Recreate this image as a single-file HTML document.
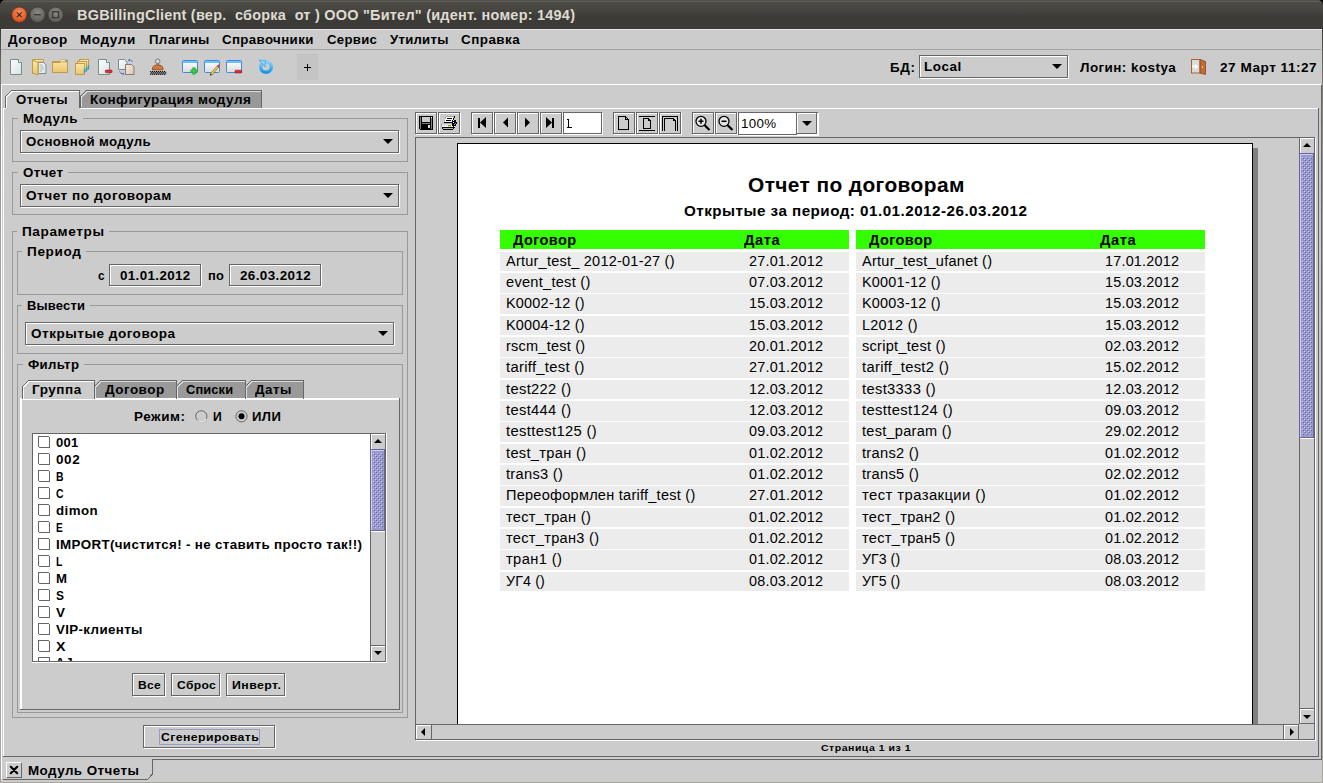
<!DOCTYPE html>
<html><head><meta charset="utf-8"><style>
html,body{margin:0;padding:0;}
body{width:1323px;height:783px;position:relative;overflow:hidden;background:#cccccc;font-family:"Liberation Sans",sans-serif;}
body div{position:absolute;box-sizing:border-box;}
</style></head><body>
<div style="left:0px;top:0px;width:1323px;height:29px;background:#000;"></div>
<div style="left:0px;top:0px;width:1323px;height:29px;background:linear-gradient(#55534e 0px,#4b4a45 3px,#45443f 12px,#3c3b37 16px,#3c3b37 29px);border-radius:5px 5px 0 0;"></div>
<div style="left:3px;top:1px;width:1317px;height:1px;background:#5e5c57;"></div>
<svg style="position:absolute;left:10px;top:5px" width="60" height="19" viewBox="0 0 60 19"><defs><radialGradient id="rc" cx="50%" cy="35%" r="60%"><stop offset="0" stop-color="#f98c5e"/><stop offset="1" stop-color="#d9521b"/></radialGradient><radialGradient id="rg" cx="50%" cy="35%" r="60%"><stop offset="0" stop-color="#8a8883"/><stop offset="1" stop-color="#5f5d58"/></radialGradient></defs><circle cx="9.3" cy="9.7" r="7.7" fill="url(#rc)" stroke="#3a2a20" stroke-width="0.6"/><path d="M6.9 7.3 L11.7 12.1 M11.7 7.3 L6.9 12.1" stroke="#3b2316" stroke-width="1.1"/><circle cx="27.5" cy="9.7" r="7.7" fill="url(#rg)" stroke="#33322e" stroke-width="0.6"/><path d="M24.1 9.7 H30.9" stroke="#3a3935" stroke-width="1.3"/><circle cx="45.6" cy="9.7" r="7.7" fill="url(#rg)" stroke="#33322e" stroke-width="0.6"/><rect x="42.6" y="6.7" width="6" height="6" fill="none" stroke="#3a3935" stroke-width="1.3"/></svg>
<div style="left:77.00px;transform:scaleX(1.0335);transform-origin:0 0;letter-spacing:0.226px;top:8.05px;font-size:14.00px;line-height:14.00px;font-weight:bold;color:#dfdbd2;white-space:pre;">BGBillingClient (вер.  сборка  от ) ООО &quot;Бител&quot; (идент. номер: 1494)</div>
<div style="left:0px;top:29px;width:1px;height:754px;background:linear-gradient(#3c3b37 0px,#6e6b66 40px,#8a8680 80px,#a09c96 200px,#a8a49e 400px);"></div>
<div style="left:1px;top:85px;width:1px;height:694px;background:#ffffff;"></div>
<div style="left:1322px;top:29px;width:1px;height:754px;background:linear-gradient(#3c3b37 0px,#6e6b66 40px,#8a8680 80px,#a09c96 200px,#a8a49e 400px);"></div>
<div style="left:1321px;top:85px;width:1px;height:675px;background:#666666;"></div>
<div style="left:1px;top:29px;width:1321px;height:1px;background:#e6e6e6;"></div>
<div style="left:1px;top:49px;width:1320px;height:1px;background:#a3a3a3;"></div>
<div style="left:8.00px;transform:scaleX(1.0581);transform-origin:0 0;letter-spacing:0.486px;top:33.83px;font-size:12.72px;line-height:12.72px;font-weight:bold;color:#000;white-space:pre;">Договор</div>
<div style="left:80.00px;transform:scaleX(1.0614);transform-origin:0 0;letter-spacing:0.570px;top:33.83px;font-size:12.72px;line-height:12.72px;font-weight:bold;color:#000;white-space:pre;">Модули</div>
<div style="left:148.80px;transform:scaleX(1.0393);transform-origin:0 0;letter-spacing:0.353px;top:33.83px;font-size:12.72px;line-height:12.72px;font-weight:bold;color:#000;white-space:pre;">Плагины</div>
<div style="left:222.20px;transform:scaleX(1.0443);transform-origin:0 0;letter-spacing:0.356px;top:33.83px;font-size:12.72px;line-height:12.72px;font-weight:bold;color:#000;white-space:pre;">Справочники</div>
<div style="left:327.40px;transform:scaleX(1.0337);transform-origin:0 0;letter-spacing:0.305px;top:33.83px;font-size:12.72px;line-height:12.72px;font-weight:bold;color:#000;white-space:pre;">Сервис</div>
<div style="left:390.00px;transform:scaleX(1.0309);transform-origin:0 0;letter-spacing:0.275px;top:33.83px;font-size:12.72px;line-height:12.72px;font-weight:bold;color:#000;white-space:pre;">Утилиты</div>
<div style="left:461.40px;transform:scaleX(1.0544);transform-origin:0 0;letter-spacing:0.456px;top:33.83px;font-size:12.72px;line-height:12.72px;font-weight:bold;color:#000;white-space:pre;">Справка</div>
<div style="left:1px;top:84px;width:1320px;height:1px;background:#ffffff;"></div>
<div style="left:890.30px;transform:scaleX(1.0563);transform-origin:0 0;letter-spacing:0.600px;top:62.23px;font-size:12.72px;line-height:12.72px;font-weight:bold;color:#000;white-space:pre;">БД:</div>
<div style="left:920px;top:56px;width:148px;height:22px;background:#cccccc;"></div>
<div style="left:920px;top:56px;width:149px;height:23px;border:1px solid #ffffff;"></div>
<div style="left:919px;top:55px;width:149px;height:23px;border:1px solid #666666;"></div>
<div style="left:924.10px;transform:scaleX(1.0591);transform-origin:0 0;letter-spacing:0.464px;top:61.23px;font-size:12.72px;line-height:12.72px;font-weight:bold;color:#000;white-space:pre;">Local</div>
<div style="left:1052.0px;top:64px;width:0;height:0;border-left:5.0px solid transparent;border-right:5.0px solid transparent;border-top:5px solid #000;"></div>
<div style="left:1080.00px;transform:scaleX(1.0598);transform-origin:0 0;letter-spacing:0.403px;top:62.23px;font-size:12.72px;line-height:12.72px;font-weight:bold;color:#000;white-space:pre;">Логин: kostya</div>
<div style="left:1220.00px;transform:scaleX(1.0705);transform-origin:0 0;letter-spacing:0.465px;top:62.23px;font-size:12.72px;line-height:12.72px;font-weight:bold;color:#000;white-space:pre;">27 Март 11:27</div>
<div style="left:297px;top:54px;width:21px;height:26px;background:#c4c4c4;"></div>
<svg style="position:absolute;left:304px;top:64px" width="8" height="8" viewBox="0 0 8 8" shape-rendering="crispEdges"><path d="M0 3.5 H7 M3.5 0 V7" stroke="#000" stroke-width="1"/></svg>
<svg style="position:absolute;left:8px;top:57px" width="18" height="19" viewBox="0 0 18 19"><defs><linearGradient id="pg" x1="0" y1="0" x2="1" y2="1"><stop offset="0" stop-color="#ffffff"/><stop offset="1" stop-color="#d6e2e2"/></linearGradient><linearGradient id="fd" x1="0" y1="0" x2="0" y2="1"><stop offset="0" stop-color="#fbe9a6"/><stop offset="1" stop-color="#e8c46e"/></linearGradient><linearGradient id="bg2" x1="0" y1="0" x2="1" y2="1"><stop offset="0" stop-color="#f2ebe0"/><stop offset="1" stop-color="#d9c8b0"/></linearGradient><linearGradient id="wn" x1="0" y1="0" x2="0" y2="1"><stop offset="0" stop-color="#ffffff"/><stop offset="1" stop-color="#dcdcdc"/></linearGradient><linearGradient id="rf" x1="0" y1="0" x2="0" y2="1"><stop offset="0" stop-color="#8fd0f8"/><stop offset="1" stop-color="#1898ec"/></linearGradient></defs><path d="M2.5 2.5 H10.5 L13.5 5.5 V17.5 H2.5 Z" fill="url(#pg)" stroke="#7c8b8b" stroke-width="1"/><path d="M10.5 2.5 V5.5 H13.5" fill="#fff" stroke="#7c8b8b" stroke-width="1"/></svg>
<svg style="position:absolute;left:30px;top:57px" width="18" height="19" viewBox="0 0 18 19"><path d="M8 5.5 H13.5 L16 8.0 V16.5 H8 Z" fill="url(#pg)" stroke="#7c8b8b" stroke-width="1"/><path d="M9.5 8 H13 M9.5 10 H14 M9.5 12 H14 M9.5 14 H12" stroke="#a8b4b4" stroke-width="1"/><path d="M2.5 2.5 H13.5 V5 H8 V16.5 H2.5 Z" fill="url(#fd)" stroke="#c49a4a" stroke-width="1"/><path d="M2.5 3 L8 5.5 V18 L2.5 16 Z" fill="url(#fd)" stroke="#c49a4a" stroke-width="1"/></svg>
<svg style="position:absolute;left:50px;top:57px" width="20" height="19" viewBox="0 0 20 19"><path d="M2.5 4.5 H10 L11 3 H17.5 V15.5 H2.5 Z" fill="url(#fd)" stroke="#c49a4a" stroke-width="1"/><path d="M11 4 H16.5" stroke="#fff" stroke-width="1.5"/><path d="M15 4 H17" stroke="#2aa0e8" stroke-width="1.5"/><path d="M2.5 5.5 H10.5 L11.5 4.8 H17.5" fill="none" stroke="#c49a4a" stroke-width="1"/></svg>
<svg style="position:absolute;left:73px;top:57px" width="19" height="20" viewBox="0 0 19 20"><rect x="6.5" y="2.5" width="9" height="10" fill="url(#fd)" stroke="#c49a4a"/><rect x="4.5" y="4.5" width="9" height="10" fill="url(#fd)" stroke="#c49a4a"/><rect x="2.5" y="6.5" width="9" height="11" fill="url(#fd)" stroke="#c49a4a"/><path d="M15.5 8 V12 M13.5 10 V14 M11.5 12 V16" stroke="#2aa0e8" stroke-width="1.5"/></svg>
<svg style="position:absolute;left:96px;top:57px" width="18" height="19" viewBox="0 0 18 19"><path d="M2.5 2.5 H10.5 L13.5 5.5 V17.5 H2.5 Z" fill="url(#pg)" stroke="#7c8b8b" stroke-width="1"/><path d="M10.5 2.5 V5.5 H13.5" fill="#fff" stroke="#7c8b8b" stroke-width="1"/><rect x="9.3" y="13" width="6.8" height="2.8" rx="1" fill="#d8303a" stroke="#a01820" stroke-width="0.6"/></svg>
<svg style="position:absolute;left:117px;top:57px" width="19" height="20" viewBox="0 0 19 20"><path d="M1.5 2.5 H7.5 L10.0 5.0 V12.5 H1.5 Z" fill="url(#pg)" stroke="#7c8b8b" stroke-width="1"/><path d="M8.5 7.5 H14.5 L17.0 10.0 V17.5 H8.5 Z" fill="url(#bg2)" stroke="#8a7866" stroke-width="1"/><path d="M11.5 3 Q13.5 2.5 15.5 4.5" fill="none" stroke="#3a6ae8" stroke-width="1"/><path d="M11 3.2 L12.8 2 L12.8 4.5 Z" fill="#3a6ae8"/><path d="M2.5 14.5 Q3.5 17 6.5 17" fill="none" stroke="#3a6ae8" stroke-width="1"/><path d="M7.5 17 L5.8 15.6 L5.8 18.4 Z" fill="#3a6ae8"/></svg>
<svg style="position:absolute;left:148px;top:57px" width="20" height="20" viewBox="0 0 20 20"><rect x="2" y="14.0" width="1.3" height="1.3" fill="#111"/><rect x="4" y="14.0" width="1.3" height="1.3" fill="#111"/><rect x="6" y="14.0" width="1.3" height="1.3" fill="#111"/><rect x="8" y="14.0" width="1.3" height="1.3" fill="#111"/><rect x="10" y="14.0" width="1.3" height="1.3" fill="#111"/><rect x="12" y="14.0" width="1.3" height="1.3" fill="#111"/><rect x="14" y="14.0" width="1.3" height="1.3" fill="#111"/><rect x="16" y="14.0" width="1.3" height="1.3" fill="#111"/><rect x="3" y="15.3" width="1.3" height="1.3" fill="#111"/><rect x="5" y="15.3" width="1.3" height="1.3" fill="#111"/><rect x="7" y="15.3" width="1.3" height="1.3" fill="#111"/><rect x="9" y="15.3" width="1.3" height="1.3" fill="#111"/><rect x="11" y="15.3" width="1.3" height="1.3" fill="#111"/><rect x="13" y="15.3" width="1.3" height="1.3" fill="#111"/><rect x="15" y="15.3" width="1.3" height="1.3" fill="#111"/><rect x="17" y="15.3" width="1.3" height="1.3" fill="#111"/><rect x="2" y="16.6" width="1.3" height="1.3" fill="#111"/><rect x="4" y="16.6" width="1.3" height="1.3" fill="#111"/><rect x="6" y="16.6" width="1.3" height="1.3" fill="#111"/><rect x="8" y="16.6" width="1.3" height="1.3" fill="#111"/><rect x="10" y="16.6" width="1.3" height="1.3" fill="#111"/><rect x="12" y="16.6" width="1.3" height="1.3" fill="#111"/><rect x="14" y="16.6" width="1.3" height="1.3" fill="#111"/><rect x="16" y="16.6" width="1.3" height="1.3" fill="#111"/><rect x="8.6" y="4.5" width="2.2" height="4.5" fill="#8a8a8a"/><circle cx="9.7" cy="4.3" r="2.3" fill="#d8d8d8" stroke="#707070" stroke-width="0.9"/><path d="M4.5 12.8 Q4.2 8.5 8.5 8 H11 Q15.3 8.5 15 12.8 Z" fill="#d27c3c" stroke="#8a4a20" stroke-width="0.9"/></svg>
<svg style="position:absolute;left:181px;top:58px" width="18" height="18" viewBox="0 0 18 18"><rect x="1.5" y="2.5" width="15" height="12" rx="1" fill="url(#wn)" stroke="#3d8ae0" stroke-width="1"/><rect x="2" y="3" width="14" height="2" fill="#6cc0f8"/><path d="M13 9.5 V16.5 M9.5 13 H16.5" stroke="#1a9e28" stroke-width="3.2"/><path d="M13 10 V16 M10 13 H16" stroke="#3ed24a" stroke-width="1.4"/></svg>
<svg style="position:absolute;left:203px;top:58px" width="18" height="18" viewBox="0 0 18 18"><rect x="1.5" y="2.5" width="15" height="12" rx="1" fill="url(#wn)" stroke="#3d8ae0" stroke-width="1"/><rect x="2" y="3" width="14" height="2" fill="#6cc0f8"/><path d="M8 16.5 L15.5 8" stroke="#6a5a20" stroke-width="2.6"/><path d="M8 16.5 L15.5 8" stroke="#f2d64a" stroke-width="1.5"/><path d="M14.5 9 L16.3 7" stroke="#e04040" stroke-width="2"/><circle cx="7.8" cy="16.8" r="0.8" fill="#000"/></svg>
<svg style="position:absolute;left:225px;top:58px" width="18" height="18" viewBox="0 0 18 18"><rect x="1.5" y="2.5" width="15" height="12" rx="1" fill="url(#wn)" stroke="#3d8ae0" stroke-width="1"/><rect x="2" y="3" width="14" height="2" fill="#6cc0f8"/><rect x="10" y="12.2" width="6.8" height="2.8" rx="0.8" fill="#d8303a" stroke="#a01820" stroke-width="0.6"/></svg>
<svg style="position:absolute;left:257px;top:58px" width="18" height="18" viewBox="0 0 18 18"><circle cx="9" cy="9" r="5.3" fill="none" stroke="url(#rf)" stroke-width="3.4"/><path d="M2 2 L8.5 2.5 L8 9 Z" fill="#8fd0f8" stroke="#2a9ae8" stroke-width="0.6"/></svg>
<svg style="position:absolute;left:1189px;top:57px" width="20" height="20" viewBox="0 0 20 20"><rect x="2.5" y="2.5" width="8.5" height="13.5" fill="#d8dcdc" stroke="#b0602a" stroke-width="1"/><path d="M11 2.5 L16.5 4.5 V17.5 L11 16 Z" fill="#c46c30" stroke="#8a4020" stroke-width="0.8"/><circle cx="13.5" cy="10" r="0.7" fill="#eee"/><path d="M3 9.5 H8 M6 7.5 L8.2 9.5 L6 11.5" fill="none" stroke="#fff" stroke-width="1.4"/></svg>
<div style="left:3px;top:108px;width:1315px;height:1px;background:#ffffff;"></div>
<div style="left:3px;top:108px;width:1px;height:649px;background:#ffffff;"></div>
<div style="left:1318px;top:108px;width:1px;height:649px;background:#666666;"></div>
<div style="left:3px;top:756px;width:1316px;height:1px;background:#666666;"></div>
<div style="left:80px;top:90px;width:182px;height:18px;background:#999999;border:1px solid #666;border-bottom:none;clip-path:polygon(6px 0,100% 0,100% 100%,0 100%,0 6px);"></div>
<svg style="position:absolute;left:80px;top:90px" width="182" height="18" viewBox="0 0 182 18" shape-rendering="crispEdges"><path d="M0.5 17 V6.5 L6.5 0.5" fill="none" stroke="#666" stroke-width="1"/><path d="M1.5 17 V7 L7 1.5 H180.5" fill="none" stroke="#dddddd" stroke-width="1"/></svg>
<div style="left:89.80px;transform:scaleX(1.0613);transform-origin:0 0;letter-spacing:0.459px;top:94.13px;font-size:12.72px;line-height:12.72px;font-weight:bold;color:#000;white-space:pre;">Конфигурация модуля</div>
<div style="left:5px;top:90px;width:75px;height:19px;background:#cccccc;clip-path:polygon(6px 0,100% 0,100% 100%,0 100%,0 6px);"></div>
<svg style="position:absolute;left:5px;top:90px" width="75" height="19" viewBox="0 0 75 19" shape-rendering="crispEdges"><path d="M0.5 18 V6.5 L6.5 0.5 H74.5 V18" fill="none" stroke="#666"/><path d="M1.5 18 V7 L7 1.5 H73.5" fill="none" stroke="#fff"/></svg>
<div style="left:4px;top:108px;width:2px;height:1px;background:#ffffff;"></div>
<div style="left:16.30px;transform:scaleX(1.0421);transform-origin:0 0;letter-spacing:0.384px;top:94.13px;font-size:12.72px;line-height:12.72px;font-weight:bold;color:#000;white-space:pre;">Отчеты</div>
<div style="left:12px;top:118px;width:396px;height:44px;border:1px solid #999999;"></div>
<div style="left:18px;top:117px;width:64.5px;height:3px;background:#cccccc;"></div>
<div style="left:23.00px;transform:scaleX(1.0533);transform-origin:0 0;letter-spacing:0.498px;top:113.03px;font-size:12.72px;line-height:12.72px;font-weight:bold;color:#000;white-space:pre;">Модуль</div>
<div style="left:21px;top:131px;width:378px;height:22px;background:#cccccc;"></div>
<div style="left:21px;top:131px;width:379px;height:23px;border:1px solid #ffffff;"></div>
<div style="left:20px;top:130px;width:379px;height:23px;border:1px solid #666666;"></div>
<div style="left:25.70px;transform:scaleX(1.0423);transform-origin:0 0;letter-spacing:0.333px;top:136.23px;font-size:12.72px;line-height:12.72px;font-weight:bold;color:#000;white-space:pre;">Основной модуль</div>
<div style="left:383.0px;top:139px;width:0;height:0;border-left:5.0px solid transparent;border-right:5.0px solid transparent;border-top:5px solid #000;"></div>
<div style="left:12px;top:172px;width:396px;height:43px;border:1px solid #999999;"></div>
<div style="left:17.7px;top:171px;width:50px;height:3px;background:#cccccc;"></div>
<div style="left:22.70px;transform:scaleX(1.0461);transform-origin:0 0;letter-spacing:0.403px;top:167.03px;font-size:12.72px;line-height:12.72px;font-weight:bold;color:#000;white-space:pre;">Отчет</div>
<div style="left:21px;top:185px;width:378px;height:22px;background:#cccccc;"></div>
<div style="left:21px;top:185px;width:379px;height:23px;border:1px solid #ffffff;"></div>
<div style="left:20px;top:184px;width:379px;height:23px;border:1px solid #666666;"></div>
<div style="left:25.50px;transform:scaleX(1.0692);transform-origin:0 0;letter-spacing:0.486px;top:190.23px;font-size:12.72px;line-height:12.72px;font-weight:bold;color:#000;white-space:pre;">Отчет по договорам</div>
<div style="left:383.0px;top:193px;width:0;height:0;border-left:5.0px solid transparent;border-right:5.0px solid transparent;border-top:5px solid #000;"></div>
<div style="left:12px;top:231px;width:396px;height:487px;border:1px solid #999999;"></div>
<div style="left:17.4px;top:230px;width:92px;height:3px;background:#cccccc;"></div>
<div style="left:22.40px;transform:scaleX(1.0675);transform-origin:0 0;letter-spacing:0.571px;top:226.23px;font-size:12.72px;line-height:12.72px;font-weight:bold;color:#000;white-space:pre;">Параметры</div>
<div style="left:17px;top:251px;width:386px;height:44px;border:1px solid #999999;"></div>
<div style="left:22.2px;top:250px;width:63.8px;height:3px;background:#cccccc;"></div>
<div style="left:27.20px;transform:scaleX(1.0663);transform-origin:0 0;letter-spacing:0.591px;top:246.23px;font-size:12.72px;line-height:12.72px;font-weight:bold;color:#000;white-space:pre;">Период</div>
<div style="left:97.60px;transform:scaleX(0.9263);transform-origin:0 0;top:270.23px;font-size:12.72px;line-height:12.72px;font-weight:bold;color:#000;white-space:pre;">с</div>
<div style="left:110px;top:265px;width:91px;height:21px;background:#cccccc;"></div>
<div style="left:110px;top:265px;width:92px;height:22px;border:1px solid #ffffff;"></div>
<div style="left:109px;top:264px;width:92px;height:22px;border:1px solid #666666;"></div>
<div style="left:120.00px;transform:scaleX(1.0517);transform-origin:0 0;letter-spacing:0.347px;top:270.23px;font-size:12.72px;line-height:12.72px;font-weight:bold;color:#000;white-space:pre;">01.01.2012</div>
<div style="left:207.60px;transform:scaleX(1.0097);transform-origin:0 0;letter-spacing:0.149px;top:270.23px;font-size:12.72px;line-height:12.72px;font-weight:bold;color:#000;white-space:pre;">по</div>
<div style="left:230px;top:265px;width:91px;height:21px;background:#cccccc;"></div>
<div style="left:230px;top:265px;width:92px;height:22px;border:1px solid #ffffff;"></div>
<div style="left:229px;top:264px;width:92px;height:22px;border:1px solid #666666;"></div>
<div style="left:239.70px;transform:scaleX(1.0564);transform-origin:0 0;letter-spacing:0.377px;top:270.23px;font-size:12.72px;line-height:12.72px;font-weight:bold;color:#000;white-space:pre;">26.03.2012</div>
<div style="left:17px;top:305px;width:386px;height:49px;border:1px solid #999999;"></div>
<div style="left:22.2px;top:304px;width:68px;height:3px;background:#cccccc;"></div>
<div style="left:27.20px;transform:scaleX(1.0202);transform-origin:0 0;letter-spacing:0.184px;top:299.93px;font-size:12.72px;line-height:12.72px;font-weight:bold;color:#000;white-space:pre;">Вывести</div>
<div style="left:26px;top:323px;width:368px;height:22px;background:#cccccc;"></div>
<div style="left:26px;top:323px;width:369px;height:23px;border:1px solid #ffffff;"></div>
<div style="left:25px;top:322px;width:369px;height:23px;border:1px solid #666666;"></div>
<div style="left:30.70px;transform:scaleX(1.0637);transform-origin:0 0;letter-spacing:0.479px;top:328.23px;font-size:12.72px;line-height:12.72px;font-weight:bold;color:#000;white-space:pre;">Открытые договора</div>
<div style="left:378.0px;top:331px;width:0;height:0;border-left:5.0px solid transparent;border-right:5.0px solid transparent;border-top:5px solid #000;"></div>
<div style="left:17px;top:364px;width:386px;height:349px;border:1px solid #999999;"></div>
<div style="left:22.9px;top:363px;width:61px;height:3px;background:#cccccc;"></div>
<div style="left:27.90px;transform:scaleX(1.0368);transform-origin:0 0;letter-spacing:0.338px;top:359.23px;font-size:12.72px;line-height:12.72px;font-weight:bold;color:#000;white-space:pre;">Фильтр</div>
<div style="left:20px;top:398px;width:380px;height:312px;border:1px solid #666666;"></div>
<div style="left:21px;top:399px;width:378px;height:1px;background:#ffffff;"></div>
<div style="left:21px;top:399px;width:1px;height:310px;background:#ffffff;"></div>
<div style="left:20px;top:398px;width:1px;height:1px;background:#ffffff;"></div>
<div style="left:20px;top:398px;width:380px;height:1px;background:#ffffff;"></div>
<div style="left:20px;top:398px;width:1px;height:312px;background:#ffffff;"></div>
<div style="left:20px;top:709px;width:380px;height:1px;background:#666666;"></div>
<div style="left:399px;top:398px;width:1px;height:312px;background:#666666;"></div>
<div style="left:94px;top:380px;width:83px;height:18px;background:#999999;clip-path:polygon(6px 0,100% 0,100% 100%,0 100%,0 6px);"></div>
<svg style="position:absolute;left:94px;top:380px" width="83" height="19" viewBox="0 0 83 19" shape-rendering="crispEdges"><path d="M0.5 18.5 V6.5 L6.5 0.5 H82.5 V18.5" fill="none" stroke="#666"/><path d="M1.5 18 V7 L7 1.5 H81.5" fill="none" stroke="#dddddd"/></svg>
<div style="left:105.00px;transform:scaleX(1.0572);transform-origin:0 0;letter-spacing:0.479px;top:384.03px;font-size:12.72px;line-height:12.72px;font-weight:bold;color:#000;white-space:pre;">Договор</div>
<div style="left:176px;top:380px;width:70px;height:18px;background:#999999;clip-path:polygon(6px 0,100% 0,100% 100%,0 100%,0 6px);"></div>
<svg style="position:absolute;left:176px;top:380px" width="70" height="19" viewBox="0 0 70 19" shape-rendering="crispEdges"><path d="M0.5 18.5 V6.5 L6.5 0.5 H69.5 V18.5" fill="none" stroke="#666"/><path d="M1.5 18 V7 L7 1.5 H68.5" fill="none" stroke="#dddddd"/></svg>
<div style="left:185.50px;transform:scaleX(1.0120);transform-origin:0 0;letter-spacing:0.109px;top:384.03px;font-size:12.72px;line-height:12.72px;font-weight:bold;color:#000;white-space:pre;">Списки</div>
<div style="left:245px;top:380px;width:59px;height:18px;background:#999999;clip-path:polygon(6px 0,100% 0,100% 100%,0 100%,0 6px);"></div>
<svg style="position:absolute;left:245px;top:380px" width="59" height="19" viewBox="0 0 59 19" shape-rendering="crispEdges"><path d="M0.5 18.5 V6.5 L6.5 0.5 H58.5 V18.5" fill="none" stroke="#666"/><path d="M1.5 18 V7 L7 1.5 H57.5" fill="none" stroke="#dddddd"/></svg>
<div style="left:255.00px;transform:scaleX(1.0474);transform-origin:0 0;letter-spacing:0.501px;top:384.03px;font-size:12.72px;line-height:12.72px;font-weight:bold;color:#000;white-space:pre;">Даты</div>
<div style="left:22px;top:380px;width:73px;height:19px;background:#cccccc;clip-path:polygon(6px 0,100% 0,100% 100%,0 100%,0 6px);"></div>
<svg style="position:absolute;left:22px;top:380px" width="73" height="19" viewBox="0 0 73 19" shape-rendering="crispEdges"><path d="M0.5 18.5 V6.5 L6.5 0.5 H72.5 V18.5" fill="none" stroke="#666"/><path d="M1.5 19 V7 L7 1.5 H71.5" fill="none" stroke="#fff"/></svg>
<div style="left:32.10px;transform:scaleX(1.0602);transform-origin:0 0;letter-spacing:0.500px;top:384.03px;font-size:12.72px;line-height:12.72px;font-weight:bold;color:#000;white-space:pre;">Группа</div>
<div style="left:133.50px;transform:scaleX(1.0593);transform-origin:0 0;letter-spacing:0.510px;top:411.03px;font-size:12.72px;line-height:12.72px;font-weight:bold;color:#000;white-space:pre;">Режим:</div>
<svg style="position:absolute;left:194px;top:409px" width="60" height="15" viewBox="0 0 60 15"><circle cx="7.3" cy="7.3" r="5.6" fill="#cccccc" stroke="#666" stroke-width="1"/><path d="M3.5 11.5 A5.6 5.6 0 0 0 12 10" stroke="#fff" fill="none"/><circle cx="47.5" cy="7.3" r="5.6" fill="#cccccc" stroke="#666" stroke-width="1"/><circle cx="47.5" cy="7.3" r="3" fill="#000"/></svg>
<div style="left:212.50px;transform:scaleX(0.9534);transform-origin:0 0;top:411.03px;font-size:12.72px;line-height:12.72px;font-weight:bold;color:#000;white-space:pre;">И</div>
<div style="left:252.40px;transform:scaleX(1.0303);transform-origin:0 0;letter-spacing:0.400px;top:411.03px;font-size:12.72px;line-height:12.72px;font-weight:bold;color:#000;white-space:pre;">ИЛИ</div>
<div style="left:32px;top:433px;width:354px;height:229px;background:#ffffff;"></div>
<div style="left:32px;top:433px;width:355px;height:1px;background:#666666;"></div>
<div style="left:32px;top:433px;width:1px;height:229px;background:#666666;"></div>
<div style="left:32px;top:662px;width:355px;height:1px;background:#ffffff;"></div>
<div style="left:386px;top:433px;width:1px;height:230px;background:#ffffff;"></div>
<div style="left:38px;top:436px;width:12px;height:12px;border:1px solid #666666;"></div>
<div style="left:49px;top:436px;width:1px;height:1px;background:#ffffff;"></div>
<div style="left:38px;top:447px;width:1px;height:1px;background:#ffffff;"></div>
<div style="left:55.60px;transform:scaleX(1.0271);transform-origin:0 0;letter-spacing:0.280px;top:436.73px;font-size:12.72px;line-height:12.72px;font-weight:bold;color:#000;white-space:pre;">001</div>
<div style="left:38px;top:453px;width:12px;height:12px;border:1px solid #666666;"></div>
<div style="left:49px;top:453px;width:1px;height:1px;background:#ffffff;"></div>
<div style="left:38px;top:464px;width:1px;height:1px;background:#ffffff;"></div>
<div style="left:55.60px;transform:scaleX(1.0576);transform-origin:0 0;letter-spacing:0.579px;top:453.73px;font-size:12.72px;line-height:12.72px;font-weight:bold;color:#000;white-space:pre;">002</div>
<div style="left:38px;top:470px;width:12px;height:12px;border:1px solid #666666;"></div>
<div style="left:49px;top:470px;width:1px;height:1px;background:#ffffff;"></div>
<div style="left:38px;top:481px;width:1px;height:1px;background:#ffffff;"></div>
<div style="left:55.60px;transform:scaleX(0.8219);transform-origin:0 0;top:470.73px;font-size:12.72px;line-height:12.72px;font-weight:bold;color:#000;white-space:pre;">B</div>
<div style="left:38px;top:487px;width:12px;height:12px;border:1px solid #666666;"></div>
<div style="left:49px;top:487px;width:1px;height:1px;background:#ffffff;"></div>
<div style="left:38px;top:498px;width:1px;height:1px;background:#ffffff;"></div>
<div style="left:55.60px;transform:scaleX(0.8219);transform-origin:0 0;top:487.73px;font-size:12.72px;line-height:12.72px;font-weight:bold;color:#000;white-space:pre;">C</div>
<div style="left:38px;top:504px;width:12px;height:12px;border:1px solid #666666;"></div>
<div style="left:49px;top:504px;width:1px;height:1px;background:#ffffff;"></div>
<div style="left:38px;top:515px;width:1px;height:1px;background:#ffffff;"></div>
<div style="left:55.60px;transform:scaleX(1.0456);transform-origin:0 0;letter-spacing:0.415px;top:504.73px;font-size:12.72px;line-height:12.72px;font-weight:bold;color:#000;white-space:pre;">dimon</div>
<div style="left:38px;top:521px;width:12px;height:12px;border:1px solid #666666;"></div>
<div style="left:49px;top:521px;width:1px;height:1px;background:#ffffff;"></div>
<div style="left:38px;top:532px;width:1px;height:1px;background:#ffffff;"></div>
<div style="left:55.60px;transform:scaleX(0.7882);transform-origin:0 0;top:521.73px;font-size:12.72px;line-height:12.72px;font-weight:bold;color:#000;white-space:pre;">E</div>
<div style="left:38px;top:538px;width:12px;height:12px;border:1px solid #666666;"></div>
<div style="left:49px;top:538px;width:1px;height:1px;background:#ffffff;"></div>
<div style="left:38px;top:549px;width:1px;height:1px;background:#ffffff;"></div>
<div style="left:55.60px;transform:scaleX(1.0506);transform-origin:0 0;letter-spacing:0.319px;top:538.73px;font-size:12.72px;line-height:12.72px;font-weight:bold;color:#000;white-space:pre;">IMPORT(чистится! - не ставить просто так!!)</div>
<div style="left:38px;top:555px;width:12px;height:12px;border:1px solid #666666;"></div>
<div style="left:49px;top:555px;width:1px;height:1px;background:#ffffff;"></div>
<div style="left:38px;top:566px;width:1px;height:1px;background:#ffffff;"></div>
<div style="left:55.60px;transform:scaleX(0.8258);transform-origin:0 0;top:555.73px;font-size:12.72px;line-height:12.72px;font-weight:bold;color:#000;white-space:pre;">L</div>
<div style="left:38px;top:572px;width:12px;height:12px;border:1px solid #666666;"></div>
<div style="left:49px;top:572px;width:1px;height:1px;background:#ffffff;"></div>
<div style="left:38px;top:583px;width:1px;height:1px;background:#ffffff;"></div>
<div style="left:55.60px;transform:scaleX(1.0353);transform-origin:0 0;top:572.73px;font-size:12.72px;line-height:12.72px;font-weight:bold;color:#000;white-space:pre;">M</div>
<div style="left:38px;top:589px;width:12px;height:12px;border:1px solid #666666;"></div>
<div style="left:49px;top:589px;width:1px;height:1px;background:#ffffff;"></div>
<div style="left:38px;top:600px;width:1px;height:1px;background:#ffffff;"></div>
<div style="left:55.60px;transform:scaleX(0.9412);transform-origin:0 0;top:589.73px;font-size:12.72px;line-height:12.72px;font-weight:bold;color:#000;white-space:pre;">S</div>
<div style="left:38px;top:606px;width:12px;height:12px;border:1px solid #666666;"></div>
<div style="left:49px;top:606px;width:1px;height:1px;background:#ffffff;"></div>
<div style="left:38px;top:617px;width:1px;height:1px;background:#ffffff;"></div>
<div style="left:55.60px;transform:scaleX(1.0588);transform-origin:0 0;top:606.73px;font-size:12.72px;line-height:12.72px;font-weight:bold;color:#000;white-space:pre;">V</div>
<div style="left:38px;top:623px;width:12px;height:12px;border:1px solid #666666;"></div>
<div style="left:49px;top:623px;width:1px;height:1px;background:#ffffff;"></div>
<div style="left:38px;top:634px;width:1px;height:1px;background:#ffffff;"></div>
<div style="left:55.60px;transform:scaleX(1.0468);transform-origin:0 0;letter-spacing:0.353px;top:623.73px;font-size:12.72px;line-height:12.72px;font-weight:bold;color:#000;white-space:pre;">VIP-клиенты</div>
<div style="left:38px;top:640px;width:12px;height:12px;border:1px solid #666666;"></div>
<div style="left:49px;top:640px;width:1px;height:1px;background:#ffffff;"></div>
<div style="left:38px;top:651px;width:1px;height:1px;background:#ffffff;"></div>
<div style="left:55.60px;transform:scaleX(1.1176);transform-origin:0 0;top:640.73px;font-size:12.72px;line-height:12.72px;font-weight:bold;color:#000;white-space:pre;">X</div>
<div style="left:38px;top:657px;width:12px;height:4px;border:1px solid #666;border-bottom:none;"></div>
<div style="left:33px;top:655px;width:330px;height:6px;overflow:hidden;">
<div style="left:22.40px;top:1.73px;font-size:12.72px;line-height:12.72px;font-weight:bold;letter-spacing:1px;">AJ</div>
</div>
<div style="left:370px;top:434px;width:16px;height:228px;background:#cccccc;"></div>
<div style="left:370px;top:434px;width:1px;height:228px;background:#666666;"></div>
<div style="left:371px;top:434px;width:1px;height:15px;background:#ffffff;"></div>
<div style="left:371px;top:646px;width:1px;height:15px;background:#ffffff;"></div>
<div style="left:385px;top:434px;width:1px;height:228px;background:#666666;"></div>
<div style="left:371px;top:434px;width:14px;height:1px;background:#ffffff;"></div>
<div style="left:374.0px;top:439px;width:0;height:0;border-left:4.0px solid transparent;border-right:4.0px solid transparent;border-bottom:4px solid #000;"></div>
<svg style="position:absolute;left:370px;top:449px" width="15" height="82" viewBox="0 0 15 82" shape-rendering="crispEdges"><defs><pattern id="bp3700449" x="3" y="4" width="4" height="4" patternUnits="userSpaceOnUse"><rect x="0" y="0" width="1" height="1" fill="#ccccff"/><rect x="1" y="1" width="1" height="1" fill="#666699"/><rect x="2" y="2" width="1" height="1" fill="#ccccff"/><rect x="3" y="3" width="1" height="1" fill="#666699"/></pattern></defs><rect x="0" y="0" width="15" height="82" fill="#666699"/><rect x="1" y="1" width="13" height="80" fill="#ccccff"/><rect x="2" y="2" width="12" height="79" fill="#9999cc"/><rect x="3" y="4" width="10" height="75" fill="url(#bp3700449)"/></svg>
<div style="left:371px;top:531px;width:14px;height:1px;background:#ffffff;"></div>
<div style="left:371px;top:645px;width:14px;height:1px;background:#666666;"></div>
<div style="left:371px;top:646px;width:14px;height:1px;background:#ffffff;"></div>
<div style="left:374.0px;top:651px;width:0;height:0;border-left:4.0px solid transparent;border-right:4.0px solid transparent;border-top:4px solid #000;"></div>
<div style="left:33px;top:661px;width:353px;height:1px;background:#666666;"></div>
<div style="left:133px;top:674px;width:32px;height:22px;background:#cccccc;"></div>
<div style="left:133px;top:674px;width:33px;height:23px;border:1px solid #ffffff;"></div>
<div style="left:132px;top:673px;width:33px;height:23px;border:1px solid #666666;"></div>
<div style="left:137.60px;transform:scaleX(1.0310);transform-origin:0 0;letter-spacing:0.321px;top:678.93px;font-size:11.66px;line-height:11.66px;font-weight:bold;color:#000;white-space:pre;">Все</div>
<div style="left:172px;top:674px;width:48px;height:22px;background:#cccccc;"></div>
<div style="left:172px;top:674px;width:49px;height:23px;border:1px solid #ffffff;"></div>
<div style="left:171px;top:673px;width:49px;height:23px;border:1px solid #666666;"></div>
<div style="left:177.00px;transform:scaleX(1.0361);transform-origin:0 0;letter-spacing:0.314px;top:678.93px;font-size:11.66px;line-height:11.66px;font-weight:bold;color:#000;white-space:pre;">Сброс</div>
<div style="left:227px;top:674px;width:58px;height:22px;background:#cccccc;"></div>
<div style="left:227px;top:674px;width:59px;height:23px;border:1px solid #ffffff;"></div>
<div style="left:226px;top:673px;width:59px;height:23px;border:1px solid #666666;"></div>
<div style="left:231.70px;transform:scaleX(1.0577);transform-origin:0 0;letter-spacing:0.398px;top:678.93px;font-size:11.66px;line-height:11.66px;font-weight:bold;color:#000;white-space:pre;">Инверт.</div>
<div style="left:144px;top:726px;width:131px;height:22px;background:#cccccc;"></div>
<div style="left:144px;top:726px;width:132px;height:23px;border:1px solid #ffffff;"></div>
<div style="left:143px;top:725px;width:132px;height:23px;border:1px solid #666666;"></div>
<div style="left:159px;top:729px;width:101px;height:16px;border:1px solid #9999cc;"></div>
<div style="left:161.00px;transform:scaleX(1.0543);transform-origin:0 0;letter-spacing:0.378px;top:730.93px;font-size:11.66px;line-height:11.66px;font-weight:bold;color:#000;white-space:pre;">Сгенерировать</div>
<div style="left:152px;top:759px;width:1170px;height:1px;background:#666666;"></div>
<div style="left:2px;top:757px;width:151px;height:22px;background:#cccccc;"></div>
<svg style="position:absolute;left:0px;top:756px" width="156" height="25" viewBox="0 0 156 25" shape-rendering="crispEdges"><path d="M152.5 3 V18 L147.5 23.5 H3" fill="none" stroke="#666"/></svg>
<div style="left:3px;top:756px;width:1316px;height:1px;background:#666666;"></div>
<div style="left:6px;top:762px;width:16px;height:16px;background:#cccccc;"></div>
<div style="left:6px;top:762px;width:15px;height:1px;background:#ffffff;"></div>
<div style="left:6px;top:762px;width:1px;height:15px;background:#ffffff;"></div>
<div style="left:7px;top:777px;width:15px;height:1px;background:#666666;"></div>
<div style="left:21px;top:763px;width:1px;height:15px;background:#666666;"></div>
<svg style="position:absolute;left:9px;top:765px" width="11" height="11" viewBox="0 0 11 11"><path d="M1.8 1.8 L8.2 8.2 M8.2 1.8 L1.8 8.2" stroke="#000" stroke-width="2.2" stroke-linecap="round"/></svg>
<div style="left:27.90px;transform:scaleX(1.0536);transform-origin:0 0;letter-spacing:0.425px;top:765.23px;font-size:12.72px;line-height:12.72px;font-weight:bold;color:#000;white-space:pre;">Модуль Отчеты</div>
<div style="left:0px;top:782px;width:1323px;height:1px;background:#a8a49e;"></div>
<div style="left:416px;top:113px;width:21px;height:21px;background:#cccccc;"></div>
<div style="left:416px;top:113px;width:22px;height:22px;border:1px solid #ffffff;"></div>
<div style="left:415px;top:112px;width:22px;height:22px;border:1px solid #666666;"></div>
<div style="left:439px;top:113px;width:21px;height:21px;background:#cccccc;"></div>
<div style="left:439px;top:113px;width:22px;height:22px;border:1px solid #ffffff;"></div>
<div style="left:438px;top:112px;width:22px;height:22px;border:1px solid #666666;"></div>
<div style="left:472px;top:113px;width:21px;height:21px;background:#cccccc;"></div>
<div style="left:472px;top:113px;width:22px;height:22px;border:1px solid #ffffff;"></div>
<div style="left:471px;top:112px;width:22px;height:22px;border:1px solid #666666;"></div>
<div style="left:495px;top:113px;width:21px;height:21px;background:#cccccc;"></div>
<div style="left:495px;top:113px;width:22px;height:22px;border:1px solid #ffffff;"></div>
<div style="left:494px;top:112px;width:22px;height:22px;border:1px solid #666666;"></div>
<div style="left:518px;top:113px;width:21px;height:21px;background:#cccccc;"></div>
<div style="left:518px;top:113px;width:22px;height:22px;border:1px solid #ffffff;"></div>
<div style="left:517px;top:112px;width:22px;height:22px;border:1px solid #666666;"></div>
<div style="left:541px;top:113px;width:21px;height:21px;background:#cccccc;"></div>
<div style="left:541px;top:113px;width:22px;height:22px;border:1px solid #ffffff;"></div>
<div style="left:540px;top:112px;width:22px;height:22px;border:1px solid #666666;"></div>
<div style="left:614px;top:113px;width:21px;height:21px;background:#cccccc;"></div>
<div style="left:614px;top:113px;width:22px;height:22px;border:1px solid #ffffff;"></div>
<div style="left:613px;top:112px;width:22px;height:22px;border:1px solid #666666;"></div>
<div style="left:637px;top:113px;width:21px;height:21px;background:#cccccc;"></div>
<div style="left:637px;top:113px;width:22px;height:22px;border:1px solid #ffffff;"></div>
<div style="left:636px;top:112px;width:22px;height:22px;border:1px solid #666666;"></div>
<div style="left:660px;top:113px;width:21px;height:21px;background:#cccccc;"></div>
<div style="left:660px;top:113px;width:22px;height:22px;border:1px solid #ffffff;"></div>
<div style="left:659px;top:112px;width:22px;height:22px;border:1px solid #666666;"></div>
<div style="left:693px;top:113px;width:21px;height:21px;background:#cccccc;"></div>
<div style="left:693px;top:113px;width:22px;height:22px;border:1px solid #ffffff;"></div>
<div style="left:692px;top:112px;width:22px;height:22px;border:1px solid #666666;"></div>
<div style="left:716px;top:113px;width:21px;height:21px;background:#cccccc;"></div>
<div style="left:716px;top:113px;width:22px;height:22px;border:1px solid #ffffff;"></div>
<div style="left:715px;top:112px;width:22px;height:22px;border:1px solid #666666;"></div>
<div style="left:564px;top:113px;width:38px;height:21px;background:#ffffff;"></div>
<div style="left:564px;top:113px;width:39px;height:22px;border:1px solid #ffffff;"></div>
<div style="left:563px;top:112px;width:39px;height:22px;border:1px solid #666666;"></div>
<svg style="position:absolute;left:566px;top:118px" width="8" height="11" viewBox="0 0 8 11" shape-rendering="crispEdges"><path d="M1 1.5 H3 M2.5 1 V10 M1 9.5 H6" stroke="#000" stroke-width="1"/></svg>
<div style="left:738px;top:112px;width:80px;height:23px;border:1px solid #666666;"></div>
<div style="left:739px;top:113px;width:57px;height:21px;background:#ffffff;"></div>
<div style="left:739px;top:135px;width:80px;height:1px;background:#ffffff;"></div>
<div style="left:818px;top:113px;width:1px;height:23px;background:#ffffff;"></div>
<div style="left:796px;top:113px;width:1px;height:22px;background:#666666;"></div>
<div style="left:797px;top:113px;width:21px;height:22px;border:1px solid #ffffff;"></div>
<div style="left:796px;top:112px;width:21px;height:22px;border:1px solid #666666;"></div>
<div style="left:801.5px;top:121px;width:0;height:0;border-left:5.0px solid transparent;border-right:5.0px solid transparent;border-top:5px solid #000;"></div>
<div style="left:740.50px;transform:scaleX(1.0263);transform-origin:0 0;letter-spacing:0.284px;top:117.20px;font-size:13.00px;line-height:13.00px;font-weight:normal;color:#000;white-space:pre;">100%</div>
<svg style="position:absolute;left:419px;top:116px" width="14" height="14" viewBox="0 0 14 14" shape-rendering="crispEdges"><path d="M0 0 H14 V14 H1 L0 13 Z" fill="#000"/><rect x="3" y="1" width="8" height="5" fill="#cccccc"/><rect x="1" y="1" width="1" height="12" fill="#808080"/><rect x="12" y="2" width="1" height="11" fill="#808080"/><rect x="12" y="1" width="1" height="1" fill="#fff"/><rect x="3" y="7" width="8" height="1" fill="#808080"/><rect x="9" y="9" width="2" height="3" fill="#e0e0e0"/></svg>
<svg style="position:absolute;left:438px;top:112px" width="22" height="22" viewBox="0 0 22 22" shape-rendering="crispEdges"><path d="M8 4 H16 L14 10 H6 Z" fill="#fff"/><rect x="8" y="4" width="8" height="1" fill="#a0a0a0"/><rect x="7" y="5" width="1" height="2" fill="#a0a0a0"/><rect x="6" y="8" width="1" height="2" fill="#b0b0b0"/><rect x="9" y="6" width="5" height="1" fill="#000"/><rect x="8" y="8" width="5" height="1" fill="#000"/><rect x="6" y="10" width="9" height="1" fill="#000"/><rect x="4" y="11" width="11" height="1" fill="#b8b8b8"/><rect x="3" y="12" width="1" height="3" fill="#a0a0a0"/><rect x="4" y="12" width="11" height="1" fill="#d8d8d8"/><rect x="4" y="13" width="11" height="1" fill="#e8e8e8"/><rect x="4" y="14" width="11" height="1" fill="#f0f0f0"/><rect x="10" y="14" width="3" height="1" fill="#e8e800"/><rect x="10" y="13" width="3" height="1" fill="#8888a0"/><rect x="4" y="15" width="11" height="1" fill="#000"/><rect x="5" y="16" width="9" height="1" fill="#b0b0b0"/><rect x="5" y="17" width="10" height="1" fill="#000"/><rect x="4" y="16" width="1" height="1" fill="#000"/><rect x="16" y="4" width="1" height="2" fill="#000"/><rect x="15" y="6" width="1" height="2" fill="#000"/><rect x="14" y="8" width="4" height="2" fill="#000"/><rect x="15" y="8" width="1" height="1" fill="#fff"/><rect x="14" y="10" width="5" height="2" fill="#000"/><rect x="15" y="10" width="1" height="1" fill="#fff"/><rect x="17" y="11" width="1" height="1" fill="#888"/><rect x="14" y="12" width="4" height="2" fill="#000"/><rect x="16" y="12" width="1" height="1" fill="#aaa"/><rect x="15" y="14" width="2" height="2" fill="#000"/><rect x="16" y="14" width="1" height="1" fill="#fff"/><rect x="15" y="16" width="1" height="1" fill="#000"/></svg>
<svg style="position:absolute;left:477px;top:117px" width="12" height="12" viewBox="0 0 12 12"><rect x="1" y="1" width="2" height="10" fill="#000"/><path d="M9 0 V11 L3 5.5 Z" fill="#000"/></svg>
<svg style="position:absolute;left:502px;top:117px" width="8" height="12" viewBox="0 0 8 12"><path d="M6 0.5 V10.5 L1 5.5 Z" fill="#000"/></svg>
<svg style="position:absolute;left:524px;top:117px" width="8" height="12" viewBox="0 0 8 12"><path d="M1 0.5 V10.5 L6 5.5 Z" fill="#000"/></svg>
<svg style="position:absolute;left:546px;top:117px" width="10" height="12" viewBox="0 0 10 12"><rect x="6" y="1" width="2" height="10" fill="#000"/><path d="M0 0 V11 L6 5.5 Z" fill="#000"/></svg>
<svg style="position:absolute;left:617px;top:115px" width="14" height="16" viewBox="0 0 14 16" shape-rendering="crispEdges"><path d="M1.5 1.5 H8.5 L11.5 4.5 V14.5 H1.5 Z M8.5 1.5 V4.5 H11.5" fill="none" stroke="#000" stroke-width="1"/></svg>
<svg style="position:absolute;left:638px;top:115px" width="19" height="17" viewBox="0 0 19 17" shape-rendering="crispEdges"><path d="M1 1.5 H17 M1 15.5 H17" stroke="#000" stroke-width="1"/><path d="M5.5 3.5 H10.5 L12.5 5.5 V13.5 H5.5 Z M10.5 3.5 V5.5 H12.5" fill="none" stroke="#000" stroke-width="1"/></svg>
<svg style="position:absolute;left:661px;top:115px" width="18" height="17" viewBox="0 0 18 17" shape-rendering="crispEdges"><path d="M1.5 16 V1.5 H16.5 V16 M3.5 16 V3.5 H12.5 L14.5 5.5 V16 M12.5 3.5 V5.5 H14.5" fill="none" stroke="#000" stroke-width="1"/></svg>
<svg style="position:absolute;left:694.4px;top:114px" width="18" height="18" viewBox="0 0 18 18"><circle cx="7" cy="7.3" r="5" fill="#e8e8e8" stroke="#000" stroke-width="1.3"/><path d="M10.5 11 L15.5 16" stroke="#000" stroke-width="2.2"/><path d="M7 4.8 V9.8 M4.5 7.3 H9.5" stroke="#000" stroke-width="1.6"/></svg>
<svg style="position:absolute;left:717px;top:114px" width="18" height="18" viewBox="0 0 18 18"><circle cx="7" cy="7.3" r="5" fill="#e8e8e8" stroke="#000" stroke-width="1.3"/><path d="M10.5 11 L15.5 16" stroke="#000" stroke-width="2.2"/><path d="M4.5 7.3 H9.5" stroke="#000" stroke-width="1.6"/></svg>
<div style="left:416px;top:138px;width:884px;height:587px;background:#cccccc;"></div>
<div style="left:415px;top:137px;width:900px;height:1px;background:#666666;"></div>
<div style="left:415px;top:137px;width:1px;height:603px;background:#666666;"></div>
<div style="left:416px;top:740px;width:900px;height:1px;background:#ffffff;"></div>
<div style="left:1315px;top:138px;width:1px;height:603px;background:#ffffff;"></div>
<div style="left:1253px;top:148px;width:5px;height:577px;background:#808080;"></div>
<div style="left:457px;top:143px;width:796px;height:582px;background:#ffffff;"></div>
<div style="left:457px;top:143px;width:796px;height:1px;background:#000;"></div>
<div style="left:457px;top:143px;width:1px;height:582px;background:#000;"></div>
<div style="left:1252px;top:143px;width:1px;height:582px;background:#000;"></div>
<div style="left:1299px;top:138px;width:16px;height:586px;background:#cccccc;"></div>
<div style="left:1299px;top:138px;width:1px;height:586px;background:#666666;"></div>
<div style="left:1300px;top:138px;width:1px;height:15px;background:#ffffff;"></div>
<div style="left:1314px;top:138px;width:1px;height:586px;background:#666666;"></div>
<div style="left:1300px;top:138px;width:14px;height:1px;background:#ffffff;"></div>
<div style="left:1303.0px;top:143px;width:0;height:0;border-left:4.0px solid transparent;border-right:4.0px solid transparent;border-bottom:4px solid #000;"></div>
<svg style="position:absolute;left:1299px;top:153px" width="15" height="285" viewBox="0 0 15 285" shape-rendering="crispEdges"><defs><pattern id="bp12990153" x="3" y="4" width="4" height="4" patternUnits="userSpaceOnUse"><rect x="0" y="0" width="1" height="1" fill="#ccccff"/><rect x="1" y="1" width="1" height="1" fill="#666699"/><rect x="2" y="2" width="1" height="1" fill="#ccccff"/><rect x="3" y="3" width="1" height="1" fill="#666699"/></pattern></defs><rect x="0" y="0" width="15" height="285" fill="#666699"/><rect x="1" y="1" width="13" height="283" fill="#ccccff"/><rect x="2" y="2" width="12" height="282" fill="#9999cc"/><rect x="3" y="4" width="10" height="278" fill="url(#bp12990153)"/></svg>
<div style="left:1300px;top:438px;width:14px;height:1px;background:#ffffff;"></div>
<div style="left:1300px;top:708px;width:14px;height:1px;background:#666666;"></div>
<div style="left:1300px;top:709px;width:14px;height:1px;background:#ffffff;"></div>
<div style="left:1300px;top:709px;width:1px;height:14px;background:#ffffff;"></div>
<div style="left:1299px;top:723px;width:15px;height:1px;background:#666666;"></div>
<div style="left:1303.0px;top:715px;width:0;height:0;border-left:4.0px solid transparent;border-right:4.0px solid transparent;border-top:4px solid #000;"></div>
<div style="left:416px;top:724px;width:899px;height:16px;background:#cccccc;"></div>
<div style="left:416px;top:724px;width:883px;height:1px;background:#666666;"></div>
<div style="left:416px;top:725px;width:15px;height:1px;background:#ffffff;"></div>
<div style="left:1284px;top:725px;width:14px;height:1px;background:#ffffff;"></div>
<div style="left:415px;top:739px;width:900px;height:1px;background:#666666;"></div>
<div style="left:416px;top:725px;width:1px;height:14px;background:#ffffff;"></div>
<div style="left:431px;top:725px;width:1px;height:14px;background:#666666;"></div>
<div style="left:421px;top:728.0px;width:0;height:0;border-top:4.0px solid transparent;border-bottom:4.0px solid transparent;border-right:4px solid #000;"></div>
<div style="left:1283px;top:725px;width:1px;height:14px;background:#666666;"></div>
<div style="left:1284px;top:725px;width:1px;height:14px;background:#ffffff;"></div>
<div style="left:1298px;top:724px;width:1px;height:15px;background:#666666;"></div>
<div style="left:1290px;top:728.0px;width:0;height:0;border-top:4.0px solid transparent;border-bottom:4.0px solid transparent;border-left:4px solid #000;"></div>
<div style="left:1314px;top:138px;width:1px;height:602px;background:#666666;"></div>
<div style="left:821.00px;transform:scaleX(1.0993);transform-origin:0 0;letter-spacing:0.482px;top:743.02px;font-size:9.54px;line-height:9.54px;font-weight:bold;color:#000;white-space:pre;">Страница 1 из 1</div>
<div style="left:748.00px;transform:scaleX(1.0342);transform-origin:0 0;letter-spacing:0.395px;top:175.10px;font-size:20.20px;line-height:20.20px;font-weight:bold;color:#000;white-space:pre;">Отчет по договорам</div>
<div style="left:683.80px;transform:scaleX(1.0630);transform-origin:0 0;letter-spacing:0.451px;top:204.20px;font-size:14.30px;line-height:14.30px;font-weight:bold;color:#000;white-space:pre;">Открытые за период: 01.01.2012-26.03.2012</div>
<div style="left:500px;top:230px;width:349px;height:19px;background:#33ff00;"></div>
<div style="left:512.80px;transform:scaleX(1.0405);transform-origin:0 0;letter-spacing:0.378px;top:233.45px;font-size:14.00px;line-height:14.00px;font-weight:bold;color:#000;white-space:pre;">Договор</div>
<div style="left:744.00px;transform:scaleX(1.0523);transform-origin:0 0;letter-spacing:0.538px;top:233.45px;font-size:14.00px;line-height:14.00px;font-weight:bold;color:#000;white-space:pre;">Дата</div>
<div style="left:500px;top:252px;width:349px;height:19px;background:#ececec;"></div>
<div style="left:505.60px;transform:scaleX(1.0359);transform-origin:0 0;letter-spacing:0.227px;top:254.15px;font-size:14.00px;line-height:14.00px;font-weight:normal;color:#000;white-space:pre;">Artur_test_ 2012-01-27 ()</div>
<div style="left:748.60px;transform:scaleX(1.0276);transform-origin:0 0;letter-spacing:0.209px;top:254.15px;font-size:14.00px;line-height:14.00px;font-weight:normal;color:#000;white-space:pre;">27.01.2012</div>
<div style="left:500px;top:273px;width:349px;height:20px;background:#ececec;"></div>
<div style="left:505.60px;transform:scaleX(1.0417);transform-origin:0 0;letter-spacing:0.260px;top:275.15px;font-size:14.00px;line-height:14.00px;font-weight:normal;color:#000;white-space:pre;">event_test ()</div>
<div style="left:748.60px;transform:scaleX(1.0276);transform-origin:0 0;letter-spacing:0.209px;top:275.15px;font-size:14.00px;line-height:14.00px;font-weight:normal;color:#000;white-space:pre;">07.03.2012</div>
<div style="left:500px;top:294px;width:349px;height:20px;background:#ececec;"></div>
<div style="left:505.60px;transform:scaleX(1.0309);transform-origin:0 0;letter-spacing:0.222px;top:296.15px;font-size:14.00px;line-height:14.00px;font-weight:normal;color:#000;white-space:pre;">K0002-12 ()</div>
<div style="left:748.60px;transform:scaleX(1.0276);transform-origin:0 0;letter-spacing:0.209px;top:296.15px;font-size:14.00px;line-height:14.00px;font-weight:normal;color:#000;white-space:pre;">15.03.2012</div>
<div style="left:500px;top:316px;width:349px;height:19px;background:#ececec;"></div>
<div style="left:505.60px;transform:scaleX(1.0309);transform-origin:0 0;letter-spacing:0.222px;top:318.15px;font-size:14.00px;line-height:14.00px;font-weight:normal;color:#000;white-space:pre;">K0004-12 ()</div>
<div style="left:748.60px;transform:scaleX(1.0276);transform-origin:0 0;letter-spacing:0.209px;top:318.15px;font-size:14.00px;line-height:14.00px;font-weight:normal;color:#000;white-space:pre;">15.03.2012</div>
<div style="left:500px;top:337px;width:349px;height:20px;background:#ececec;"></div>
<div style="left:505.60px;transform:scaleX(1.0356);transform-origin:0 0;letter-spacing:0.231px;top:339.15px;font-size:14.00px;line-height:14.00px;font-weight:normal;color:#000;white-space:pre;">rscm_test ()</div>
<div style="left:748.60px;transform:scaleX(1.0276);transform-origin:0 0;letter-spacing:0.209px;top:339.15px;font-size:14.00px;line-height:14.00px;font-weight:normal;color:#000;white-space:pre;">20.01.2012</div>
<div style="left:500px;top:358px;width:349px;height:20px;background:#ececec;"></div>
<div style="left:505.60px;transform:scaleX(1.0558);transform-origin:0 0;letter-spacing:0.287px;top:360.15px;font-size:14.00px;line-height:14.00px;font-weight:normal;color:#000;white-space:pre;">tariff_test ()</div>
<div style="left:748.60px;transform:scaleX(1.0276);transform-origin:0 0;letter-spacing:0.209px;top:360.15px;font-size:14.00px;line-height:14.00px;font-weight:normal;color:#000;white-space:pre;">27.01.2012</div>
<div style="left:500px;top:380px;width:349px;height:19px;background:#ececec;"></div>
<div style="left:505.60px;transform:scaleX(1.0512);transform-origin:0 0;letter-spacing:0.320px;top:382.15px;font-size:14.00px;line-height:14.00px;font-weight:normal;color:#000;white-space:pre;">test222 ()</div>
<div style="left:748.60px;transform:scaleX(1.0276);transform-origin:0 0;letter-spacing:0.209px;top:382.15px;font-size:14.00px;line-height:14.00px;font-weight:normal;color:#000;white-space:pre;">12.03.2012</div>
<div style="left:500px;top:401px;width:349px;height:20px;background:#ececec;"></div>
<div style="left:505.60px;transform:scaleX(1.0512);transform-origin:0 0;letter-spacing:0.320px;top:403.15px;font-size:14.00px;line-height:14.00px;font-weight:normal;color:#000;white-space:pre;">test444 ()</div>
<div style="left:748.60px;transform:scaleX(1.0276);transform-origin:0 0;letter-spacing:0.209px;top:403.15px;font-size:14.00px;line-height:14.00px;font-weight:normal;color:#000;white-space:pre;">12.03.2012</div>
<div style="left:500px;top:422px;width:349px;height:20px;background:#ececec;"></div>
<div style="left:505.60px;transform:scaleX(1.0552);transform-origin:0 0;letter-spacing:0.329px;top:424.15px;font-size:14.00px;line-height:14.00px;font-weight:normal;color:#000;white-space:pre;">testtest125 ()</div>
<div style="left:748.60px;transform:scaleX(1.0276);transform-origin:0 0;letter-spacing:0.209px;top:424.15px;font-size:14.00px;line-height:14.00px;font-weight:normal;color:#000;white-space:pre;">09.03.2012</div>
<div style="left:500px;top:444px;width:349px;height:19px;background:#ececec;"></div>
<div style="left:505.60px;transform:scaleX(1.0461);transform-origin:0 0;letter-spacing:0.293px;top:446.15px;font-size:14.00px;line-height:14.00px;font-weight:normal;color:#000;white-space:pre;">test_тран ()</div>
<div style="left:748.60px;transform:scaleX(1.0276);transform-origin:0 0;letter-spacing:0.209px;top:446.15px;font-size:14.00px;line-height:14.00px;font-weight:normal;color:#000;white-space:pre;">01.02.2012</div>
<div style="left:500px;top:465px;width:349px;height:20px;background:#ececec;"></div>
<div style="left:505.60px;transform:scaleX(1.0457);transform-origin:0 0;letter-spacing:0.285px;top:467.15px;font-size:14.00px;line-height:14.00px;font-weight:normal;color:#000;white-space:pre;">trans3 ()</div>
<div style="left:748.60px;transform:scaleX(1.0276);transform-origin:0 0;letter-spacing:0.209px;top:467.15px;font-size:14.00px;line-height:14.00px;font-weight:normal;color:#000;white-space:pre;">01.02.2012</div>
<div style="left:500px;top:486px;width:349px;height:20px;background:#ececec;"></div>
<div style="left:505.60px;transform:scaleX(1.0375);transform-origin:0 0;letter-spacing:0.245px;top:488.15px;font-size:14.00px;line-height:14.00px;font-weight:normal;color:#000;white-space:pre;">Переоформлен tariff_test ()</div>
<div style="left:748.60px;transform:scaleX(1.0276);transform-origin:0 0;letter-spacing:0.209px;top:488.15px;font-size:14.00px;line-height:14.00px;font-weight:normal;color:#000;white-space:pre;">27.01.2012</div>
<div style="left:500px;top:508px;width:349px;height:19px;background:#ececec;"></div>
<div style="left:505.60px;transform:scaleX(1.0421);transform-origin:0 0;letter-spacing:0.287px;top:510.15px;font-size:14.00px;line-height:14.00px;font-weight:normal;color:#000;white-space:pre;">тест_тран ()</div>
<div style="left:748.60px;transform:scaleX(1.0276);transform-origin:0 0;letter-spacing:0.209px;top:510.15px;font-size:14.00px;line-height:14.00px;font-weight:normal;color:#000;white-space:pre;">01.02.2012</div>
<div style="left:500px;top:529px;width:349px;height:20px;background:#ececec;"></div>
<div style="left:505.60px;transform:scaleX(1.0413);transform-origin:0 0;letter-spacing:0.284px;top:531.15px;font-size:14.00px;line-height:14.00px;font-weight:normal;color:#000;white-space:pre;">тест_тран3 ()</div>
<div style="left:748.60px;transform:scaleX(1.0276);transform-origin:0 0;letter-spacing:0.209px;top:531.15px;font-size:14.00px;line-height:14.00px;font-weight:normal;color:#000;white-space:pre;">01.02.2012</div>
<div style="left:500px;top:550px;width:349px;height:20px;background:#ececec;"></div>
<div style="left:505.60px;transform:scaleX(1.0507);transform-origin:0 0;letter-spacing:0.350px;top:552.15px;font-size:14.00px;line-height:14.00px;font-weight:normal;color:#000;white-space:pre;">тран1 ()</div>
<div style="left:748.60px;transform:scaleX(1.0276);transform-origin:0 0;letter-spacing:0.209px;top:552.15px;font-size:14.00px;line-height:14.00px;font-weight:normal;color:#000;white-space:pre;">01.02.2012</div>
<div style="left:500px;top:572px;width:349px;height:19px;background:#ececec;"></div>
<div style="left:505.60px;transform:scaleX(1.0187);transform-origin:0 0;letter-spacing:0.137px;top:574.15px;font-size:14.00px;line-height:14.00px;font-weight:normal;color:#000;white-space:pre;">УГ4 ()</div>
<div style="left:748.60px;transform:scaleX(1.0276);transform-origin:0 0;letter-spacing:0.209px;top:574.15px;font-size:14.00px;line-height:14.00px;font-weight:normal;color:#000;white-space:pre;">08.03.2012</div>
<div style="left:856px;top:230px;width:349px;height:19px;background:#33ff00;"></div>
<div style="left:868.80px;transform:scaleX(1.0405);transform-origin:0 0;letter-spacing:0.378px;top:233.45px;font-size:14.00px;line-height:14.00px;font-weight:bold;color:#000;white-space:pre;">Договор</div>
<div style="left:1100.00px;transform:scaleX(1.0523);transform-origin:0 0;letter-spacing:0.538px;top:233.45px;font-size:14.00px;line-height:14.00px;font-weight:bold;color:#000;white-space:pre;">Дата</div>
<div style="left:856px;top:252px;width:349px;height:19px;background:#ececec;"></div>
<div style="left:861.60px;transform:scaleX(1.0389);transform-origin:0 0;letter-spacing:0.238px;top:254.15px;font-size:14.00px;line-height:14.00px;font-weight:normal;color:#000;white-space:pre;">Artur_test_ufanet ()</div>
<div style="left:1104.60px;transform:scaleX(1.0276);transform-origin:0 0;letter-spacing:0.209px;top:254.15px;font-size:14.00px;line-height:14.00px;font-weight:normal;color:#000;white-space:pre;">17.01.2012</div>
<div style="left:856px;top:273px;width:349px;height:20px;background:#ececec;"></div>
<div style="left:861.60px;transform:scaleX(1.0309);transform-origin:0 0;letter-spacing:0.222px;top:275.15px;font-size:14.00px;line-height:14.00px;font-weight:normal;color:#000;white-space:pre;">K0001-12 ()</div>
<div style="left:1104.60px;transform:scaleX(1.0276);transform-origin:0 0;letter-spacing:0.209px;top:275.15px;font-size:14.00px;line-height:14.00px;font-weight:normal;color:#000;white-space:pre;">15.03.2012</div>
<div style="left:856px;top:294px;width:349px;height:20px;background:#ececec;"></div>
<div style="left:861.60px;transform:scaleX(1.0309);transform-origin:0 0;letter-spacing:0.222px;top:296.15px;font-size:14.00px;line-height:14.00px;font-weight:normal;color:#000;white-space:pre;">K0003-12 ()</div>
<div style="left:1104.60px;transform:scaleX(1.0276);transform-origin:0 0;letter-spacing:0.209px;top:296.15px;font-size:14.00px;line-height:14.00px;font-weight:normal;color:#000;white-space:pre;">15.03.2012</div>
<div style="left:856px;top:316px;width:349px;height:19px;background:#ececec;"></div>
<div style="left:861.60px;transform:scaleX(1.0323);transform-origin:0 0;letter-spacing:0.233px;top:318.15px;font-size:14.00px;line-height:14.00px;font-weight:normal;color:#000;white-space:pre;">L2012 ()</div>
<div style="left:1104.60px;transform:scaleX(1.0276);transform-origin:0 0;letter-spacing:0.209px;top:318.15px;font-size:14.00px;line-height:14.00px;font-weight:normal;color:#000;white-space:pre;">15.03.2012</div>
<div style="left:856px;top:337px;width:349px;height:20px;background:#ececec;"></div>
<div style="left:861.60px;transform:scaleX(1.0425);transform-origin:0 0;letter-spacing:0.242px;top:339.15px;font-size:14.00px;line-height:14.00px;font-weight:normal;color:#000;white-space:pre;">script_test ()</div>
<div style="left:1104.60px;transform:scaleX(1.0276);transform-origin:0 0;letter-spacing:0.209px;top:339.15px;font-size:14.00px;line-height:14.00px;font-weight:normal;color:#000;white-space:pre;">02.03.2012</div>
<div style="left:856px;top:358px;width:349px;height:20px;background:#ececec;"></div>
<div style="left:861.60px;transform:scaleX(1.0541);transform-origin:0 0;letter-spacing:0.287px;top:360.15px;font-size:14.00px;line-height:14.00px;font-weight:normal;color:#000;white-space:pre;">tariff_test2 ()</div>
<div style="left:1104.60px;transform:scaleX(1.0276);transform-origin:0 0;letter-spacing:0.209px;top:360.15px;font-size:14.00px;line-height:14.00px;font-weight:normal;color:#000;white-space:pre;">15.02.2012</div>
<div style="left:856px;top:380px;width:349px;height:19px;background:#ececec;"></div>
<div style="left:861.60px;transform:scaleX(1.0507);transform-origin:0 0;letter-spacing:0.323px;top:382.15px;font-size:14.00px;line-height:14.00px;font-weight:normal;color:#000;white-space:pre;">test3333 ()</div>
<div style="left:1104.60px;transform:scaleX(1.0276);transform-origin:0 0;letter-spacing:0.209px;top:382.15px;font-size:14.00px;line-height:14.00px;font-weight:normal;color:#000;white-space:pre;">12.03.2012</div>
<div style="left:856px;top:401px;width:349px;height:20px;background:#ececec;"></div>
<div style="left:861.60px;transform:scaleX(1.0552);transform-origin:0 0;letter-spacing:0.329px;top:403.15px;font-size:14.00px;line-height:14.00px;font-weight:normal;color:#000;white-space:pre;">testtest124 ()</div>
<div style="left:1104.60px;transform:scaleX(1.0276);transform-origin:0 0;letter-spacing:0.209px;top:403.15px;font-size:14.00px;line-height:14.00px;font-weight:normal;color:#000;white-space:pre;">09.03.2012</div>
<div style="left:856px;top:422px;width:349px;height:20px;background:#ececec;"></div>
<div style="left:861.60px;transform:scaleX(1.0385);transform-origin:0 0;letter-spacing:0.257px;top:424.15px;font-size:14.00px;line-height:14.00px;font-weight:normal;color:#000;white-space:pre;">test_param ()</div>
<div style="left:1104.60px;transform:scaleX(1.0276);transform-origin:0 0;letter-spacing:0.209px;top:424.15px;font-size:14.00px;line-height:14.00px;font-weight:normal;color:#000;white-space:pre;">29.02.2012</div>
<div style="left:856px;top:444px;width:349px;height:19px;background:#ececec;"></div>
<div style="left:861.60px;transform:scaleX(1.0457);transform-origin:0 0;letter-spacing:0.285px;top:446.15px;font-size:14.00px;line-height:14.00px;font-weight:normal;color:#000;white-space:pre;">trans2 ()</div>
<div style="left:1104.60px;transform:scaleX(1.0276);transform-origin:0 0;letter-spacing:0.209px;top:446.15px;font-size:14.00px;line-height:14.00px;font-weight:normal;color:#000;white-space:pre;">01.02.2012</div>
<div style="left:856px;top:465px;width:349px;height:20px;background:#ececec;"></div>
<div style="left:861.60px;transform:scaleX(1.0457);transform-origin:0 0;letter-spacing:0.285px;top:467.15px;font-size:14.00px;line-height:14.00px;font-weight:normal;color:#000;white-space:pre;">trans5 ()</div>
<div style="left:1104.60px;transform:scaleX(1.0276);transform-origin:0 0;letter-spacing:0.209px;top:467.15px;font-size:14.00px;line-height:14.00px;font-weight:normal;color:#000;white-space:pre;">02.02.2012</div>
<div style="left:856px;top:486px;width:349px;height:20px;background:#ececec;"></div>
<div style="left:861.60px;transform:scaleX(1.0599);transform-origin:0 0;letter-spacing:0.390px;top:488.15px;font-size:14.00px;line-height:14.00px;font-weight:normal;color:#000;white-space:pre;">тест тразакции ()</div>
<div style="left:1104.60px;transform:scaleX(1.0276);transform-origin:0 0;letter-spacing:0.209px;top:488.15px;font-size:14.00px;line-height:14.00px;font-weight:normal;color:#000;white-space:pre;">01.02.2012</div>
<div style="left:856px;top:508px;width:349px;height:19px;background:#ececec;"></div>
<div style="left:861.60px;transform:scaleX(1.0413);transform-origin:0 0;letter-spacing:0.284px;top:510.15px;font-size:14.00px;line-height:14.00px;font-weight:normal;color:#000;white-space:pre;">тест_тран2 ()</div>
<div style="left:1104.60px;transform:scaleX(1.0276);transform-origin:0 0;letter-spacing:0.209px;top:510.15px;font-size:14.00px;line-height:14.00px;font-weight:normal;color:#000;white-space:pre;">01.02.2012</div>
<div style="left:856px;top:529px;width:349px;height:20px;background:#ececec;"></div>
<div style="left:861.60px;transform:scaleX(1.0413);transform-origin:0 0;letter-spacing:0.284px;top:531.15px;font-size:14.00px;line-height:14.00px;font-weight:normal;color:#000;white-space:pre;">тест_тран5 ()</div>
<div style="left:1104.60px;transform:scaleX(1.0276);transform-origin:0 0;letter-spacing:0.209px;top:531.15px;font-size:14.00px;line-height:14.00px;font-weight:normal;color:#000;white-space:pre;">01.02.2012</div>
<div style="left:856px;top:550px;width:349px;height:20px;background:#ececec;"></div>
<div style="left:861.60px;transform:scaleX(1.0080);transform-origin:0 0;letter-spacing:0.060px;top:552.15px;font-size:14.00px;line-height:14.00px;font-weight:normal;color:#000;white-space:pre;">УГ3 ()</div>
<div style="left:1104.60px;transform:scaleX(1.0276);transform-origin:0 0;letter-spacing:0.209px;top:552.15px;font-size:14.00px;line-height:14.00px;font-weight:normal;color:#000;white-space:pre;">08.03.2012</div>
<div style="left:856px;top:572px;width:349px;height:19px;background:#ececec;"></div>
<div style="left:861.60px;transform:scaleX(1.0080);transform-origin:0 0;letter-spacing:0.060px;top:574.15px;font-size:14.00px;line-height:14.00px;font-weight:normal;color:#000;white-space:pre;">УГ5 ()</div>
<div style="left:1104.60px;transform:scaleX(1.0276);transform-origin:0 0;letter-spacing:0.209px;top:574.15px;font-size:14.00px;line-height:14.00px;font-weight:normal;color:#000;white-space:pre;">08.03.2012</div>
</body></html>
